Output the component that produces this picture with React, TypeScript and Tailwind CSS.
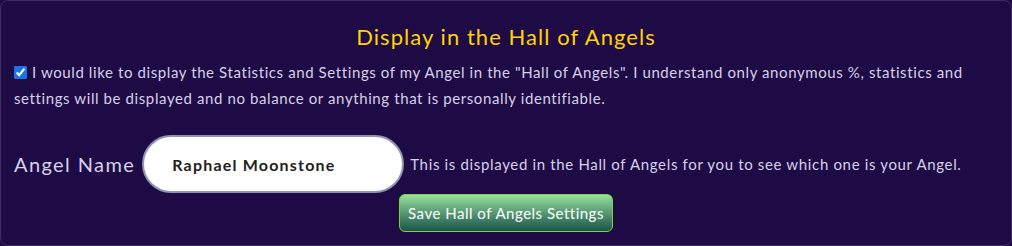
import React, { useState } from 'react';

const App = () => {
  const [show, setShow] = useState(true);
  const [name, setName] = useState('Raphael Moonstone');

  return (
    <div
      className="w-[1012px] h-[246px] bg-[#1e0a44]"
      style={{ fontFamily: 'Lato, "Noto Sans", sans-serif' }}
    >
      <div className="h-full rounded-[8px] border border-[#3d2f62] bg-[#1e0a44] px-[13px] pt-[21px] pb-[13px] text-[#d6d1ea]">
        <h2 className="text-center text-[22px] leading-[30px] tracking-[1.05px] text-[#ffd400]">
          Display in the Hall of Angels
        </h2>
        <p className="mt-[7px] text-[15px] leading-[26px] tracking-[0.6px]">
          <input
            type="checkbox"
            checked={show}
            onChange={e => setShow(e.target.checked)}
            className="mr-[5px] h-[13px] w-[13px] align-[-1px] accent-[#1a73e8]"
          />
          I would like to display the Statistics and Settings of my Angel in the "Hall of Angels". I understand only anonymous %, statistics and
          <br />
          settings will be displayed and no balance or anything that is personally identifiable.
        </p>

        <div className="mt-[24px] flex items-center">
          <label className="text-[20px] tracking-[1.4px] text-[#d6d1ea]">Angel Name</label>
          <input
            className="ml-[7px] h-[58px] w-[262px] rounded-full border-2 border-[#8e94b3] bg-white pl-[28px] text-[16px] font-bold tracking-[1.2px] text-[#222] outline-none"
            value={name}
            onChange={e => setName(e.target.value)}
          />
          <span className="ml-[6px] text-[15px] tracking-[0.66px]">
            This is displayed in the Hall of Angels for you to see which one is your Angel.
          </span>
        </div>

        <div className="mt-px flex justify-center">
          <button className="h-[38px] w-[214px] rounded-[6px] border border-[#7fd62c] bg-gradient-to-b from-[#97e19e] to-[#18554b] text-[15px] tracking-[0.5px] text-white">
            Save Hall of Angels Settings
          </button>
        </div>
      </div>
    </div>
  );
};

export default App;
